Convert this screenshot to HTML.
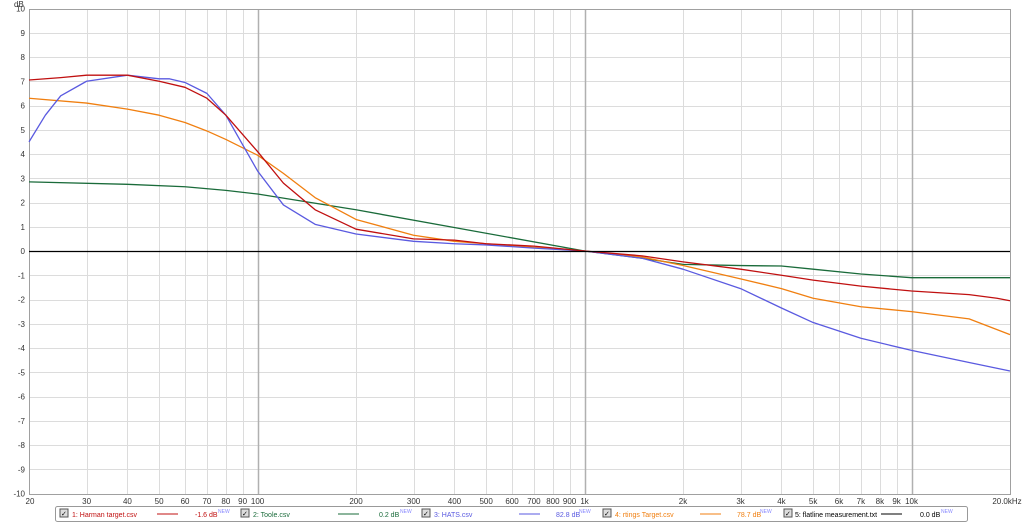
<!DOCTYPE html>
<html><head><meta charset="utf-8"><style>
html,body{margin:0;padding:0;background:#fff;width:1024px;height:524px;overflow:hidden;font-family:"Liberation Sans",sans-serif}
svg{position:absolute;left:0;top:0}
</style></head><body>
<svg width="1024" height="524" xmlns="http://www.w3.org/2000/svg" font-family="Liberation Sans, sans-serif" font-size="8" fill="#333">
<rect x="0" y="0" width="1024" height="524" fill="#fff"/>
<g stroke="#dcdcdc" stroke-width="1" id="h"></g>
<g id="grid"></g>
<rect x="29.5" y="9.5" width="981" height="485" fill="none" stroke="#a0a0a0"/>
<g transform="translate(29,251) scale(327,-24.25)" fill="none" stroke-width="1.3" stroke-linejoin="round">
<polyline vector-effect="non-scaling-stroke" stroke="#1a6b3a" points="0,2.85 .301,2.75 .477,2.65 .602,2.5 .699,2.35 1,1.7 1.699,0 1.875,-0.3 2,-0.55 2.176,-0.6 2.301,-0.62 2.398,-0.75 2.544,-0.95 2.699,-1.1 3,-1.1"/>
<polyline vector-effect="non-scaling-stroke" stroke="#f07f10" points="0,6.3 .176,6.1 .301,5.85 .398,5.6 .477,5.3 .544,4.95 .602,4.6 .699,3.95 .778,3.2 .875,2.2 1,1.3 1.176,0.65 1.301,0.4 1.398,0.3 1.544,0.15 1.699,0 1.875,-0.25 2,-0.6 2.176,-1.15 2.301,-1.55 2.398,-1.95 2.544,-2.3 2.699,-2.5 2.875,-2.8 3,-3.45"/>
<polyline vector-effect="non-scaling-stroke" stroke="#5a5ae0" points="0,4.5 .05,5.6 .097,6.4 .176,7.0 .301,7.25 .398,7.1 .43,7.1 .477,6.95 .544,6.5 .602,5.6 .699,3.3 .778,1.9 .875,1.1 1,0.7 1.176,0.4 1.301,0.3 1.398,0.25 1.544,0.12 1.699,0 1.875,-0.3 2,-0.75 2.176,-1.55 2.301,-2.35 2.398,-2.95 2.544,-3.6 2.699,-4.1 2.875,-4.6 3,-4.95"/>
<polyline vector-effect="non-scaling-stroke" stroke="#c01010" points="0,7.05 .097,7.15 .176,7.25 .301,7.25 .398,7.0 .477,6.75 .544,6.3 .602,5.6 .699,4.1 .778,2.8 .875,1.7 1,0.9 1.176,0.5 1.301,0.45 1.398,0.3 1.544,0.2 1.699,0 1.875,-0.2 2,-0.45 2.176,-0.75 2.301,-1.0 2.398,-1.2 2.544,-1.45 2.699,-1.65 2.875,-1.8 2.96,-1.95 3,-2.05"/>
</g>
<line x1="29" y1="251.5" x2="1010" y2="251.5" stroke="#000" stroke-width="1.3"/>
<g id="lab"></g>
<text x="14" y="7" font-size="8">dB</text>
<rect x="55.5" y="506.5" width="912" height="15" rx="2" fill="#fff" stroke="#999"/>
<g font-size="7">
<rect x="60" y="509" width="8" height="8" fill="#ddd" stroke="#555"/><text x="61" y="516" fill="#000">✓</text>
<text x="72" y="517" fill="#c01010">1: Harman target.csv</text><line x1="157" y1="514" x2="178" y2="514" stroke="#c01010"/><text x="195" y="517" fill="#c01010">-1.6 dB</text><text x="218" y="513" fill="#88f" font-size="5">NEW</text>
<rect x="241" y="509" width="8" height="8" fill="#ddd" stroke="#555"/><text x="242" y="516" fill="#000">✓</text>
<text x="253" y="517" fill="#1a6b3a">2: Toole.csv</text><line x1="338" y1="514" x2="359" y2="514" stroke="#1a6b3a"/><text x="379" y="517" fill="#1a6b3a">0.2 dB</text><text x="400" y="513" fill="#88f" font-size="5">NEW</text>
<rect x="422" y="509" width="8" height="8" fill="#ddd" stroke="#555"/><text x="423" y="516" fill="#000">✓</text>
<text x="434" y="517" fill="#5a5ae0">3: HATS.csv</text><line x1="519" y1="514" x2="540" y2="514" stroke="#5a5ae0"/><text x="556" y="517" fill="#5a5ae0">82.8 dB</text><text x="579" y="513" fill="#88f" font-size="5">NEW</text>
<rect x="603" y="509" width="8" height="8" fill="#ddd" stroke="#555"/><text x="604" y="516" fill="#000">✓</text>
<text x="615" y="517" fill="#f07f10">4: rtings Target.csv</text><line x1="700" y1="514" x2="721" y2="514" stroke="#f07f10"/><text x="737" y="517" fill="#f07f10">78.7 dB</text><text x="760" y="513" fill="#88f" font-size="5">NEW</text>
<rect x="784" y="509" width="8" height="8" fill="#ddd" stroke="#555"/><text x="785" y="516" fill="#000">✓</text>
<text x="795" y="517" fill="#000">5: flatline measurement.txt</text><line x1="881" y1="514" x2="902" y2="514" stroke="#000"/><text x="920" y="517" fill="#000">0.0 dB</text><text x="941" y="513" fill="#88f" font-size="5">NEW</text>
</g>
</svg>
<script>
var NS="http://www.w3.org/2000/svg";
var grid=document.getElementById('grid'),lab=document.getElementById('lab');
function el(t,a,p,txt){var e=document.createElementNS(NS,t);for(var k in a)e.setAttribute(k,a[k]);if(txt!=null)e.textContent=txt;p.appendChild(e);return e;}
for(var d=-10;d<=10;d++){var y=251-24.25*d;
 if(d!=0&&d!=10&&d!=-10)el('line',{x1:29,x2:1010,y1:Math.round(y)+.5,y2:Math.round(y)+.5,stroke:'#dcdcdc'},grid);
 el('text',{x:25,y:y+3,'text-anchor':'end'},lab,String(d));}
var fs=[30,40,50,60,70,80,90,100,200,300,400,500,600,700,800,900,1000,2000,3000,4000,5000,6000,7000,8000,9000,10000];
var L={30:'30',40:'40',50:'50',60:'60',70:'70',80:'80',90:'90',100:'100',200:'200',300:'300',400:'400',500:'500',600:'600',700:'700',800:'800',900:'900',1000:'1k',2000:'2k',3000:'3k',4000:'4k',5000:'5k',6000:'6k',7000:'7k',8000:'8k',9000:'9k',10000:'10k'};
fs.forEach(function(f){var x=29+327*Math.log10(f/20);var maj=(f==100||f==1000||f==10000);
 el('line',{x1:Math.round(x)+.5,x2:Math.round(x)+.5,y1:10,y2:494,stroke:maj?'#b0b0b0':'#dcdcdc','stroke-width':maj?1.5:1},grid);
 el('text',{x:x,y:504,'text-anchor':'middle'},lab,L[f]);});
el('text',{x:30,y:504,'text-anchor':'middle'},lab,'20');
el('text',{x:1007,y:504,'text-anchor':'middle'},lab,'20.0kHz');
</script>
</body></html>
